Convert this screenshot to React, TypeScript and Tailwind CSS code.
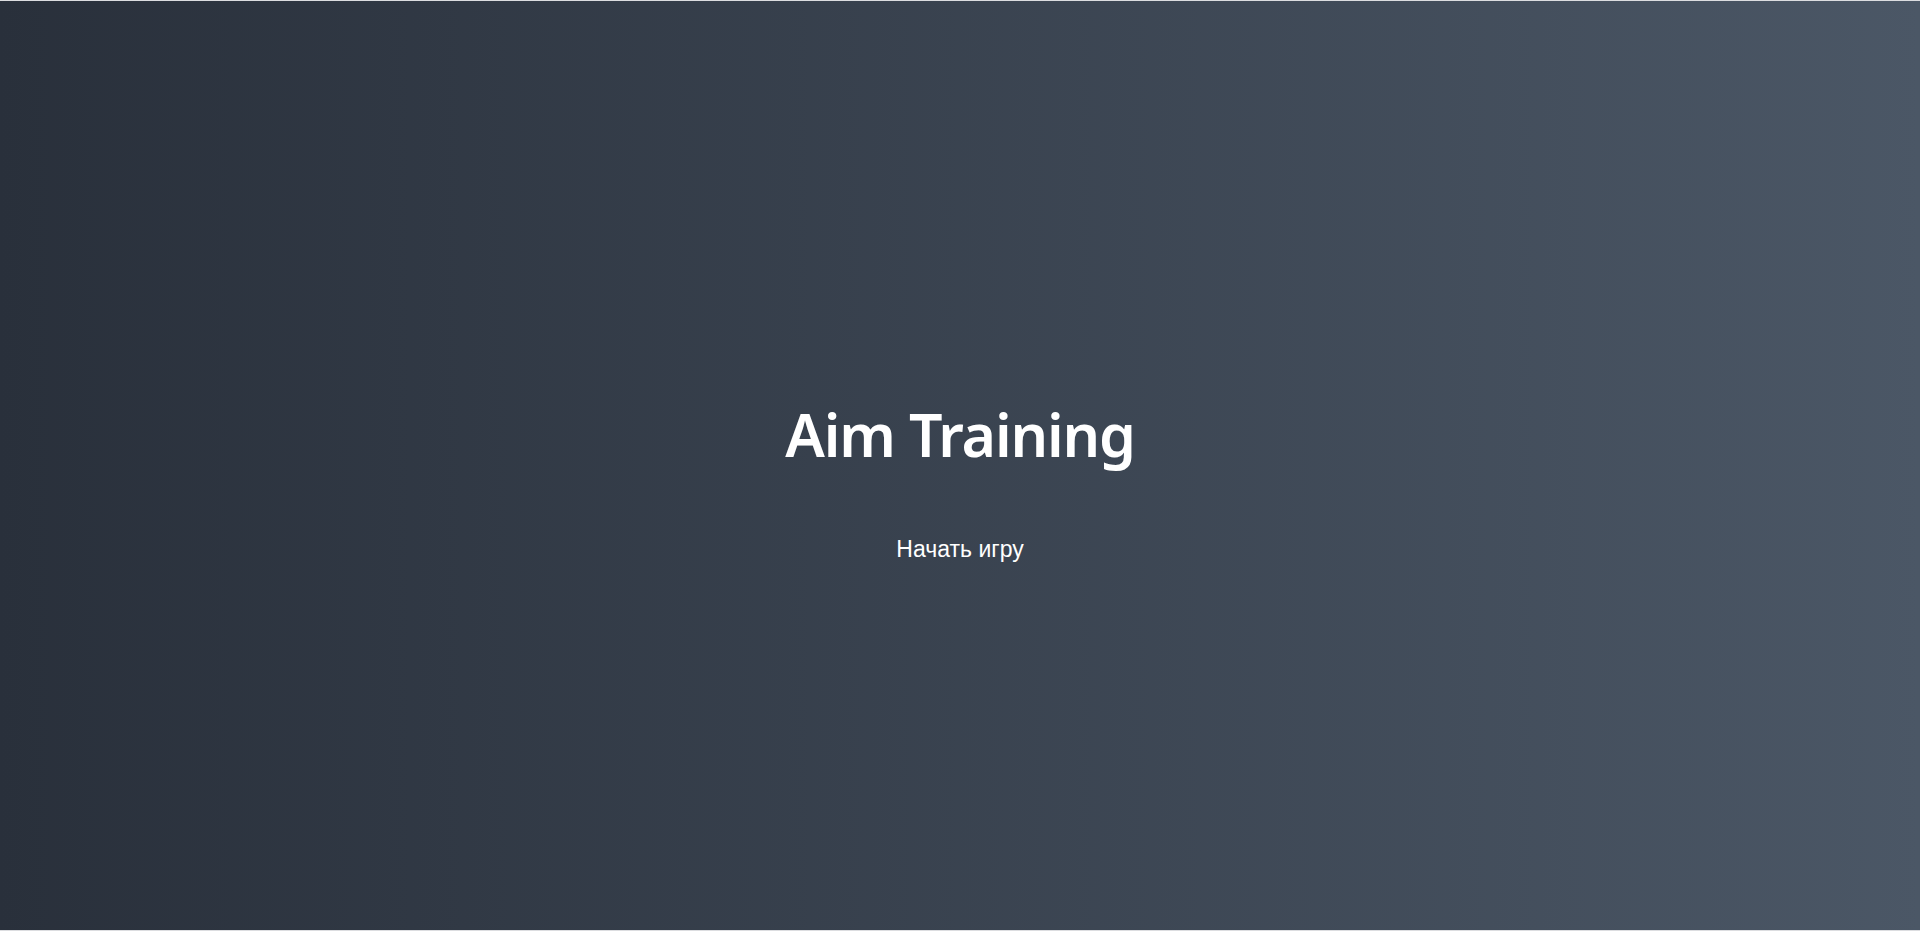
export default function App() {
  return (
    <div className="flex h-[931px] w-full flex-col border-t border-b border-[#dcdde0] bg-gradient-to-r from-[#29303b] to-[#4b5766]">
      <main className="flex flex-1 flex-col items-center justify-center pt-[40px]">
        <h1 className="font-['Noto_Sans','Open_Sans',sans-serif] text-[59px] font-semibold leading-none tracking-[-0.02em] text-white">
          Aim Training
        </h1>
        <button className="mt-[68px] font-['Liberation_Sans',Arial,sans-serif] text-[23px] text-white">
          Начать игру
        </button>
      </main>
    </div>
  );
}
